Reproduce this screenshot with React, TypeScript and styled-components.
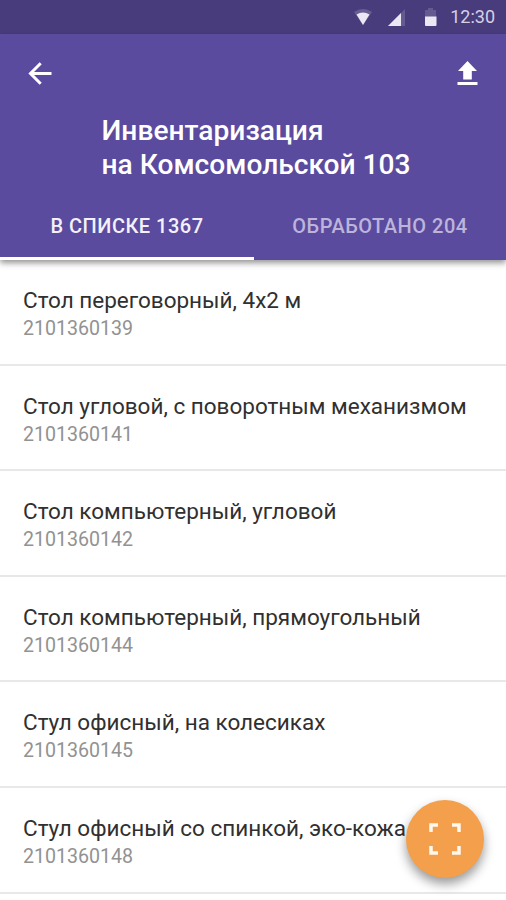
import React from 'react';
import styled, { createGlobalStyle } from 'styled-components';

const GlobalStyle = createGlobalStyle`
  * { box-sizing: border-box; }
  body { margin: 0; background: #fff; font-family: Roboto, "Noto Sans", sans-serif; }
`;

const Screen = styled.div`
  position: relative;
  width: 506px;
  height: 900px;
  overflow: hidden;
  background: #fff;
`;

const StatusBar = styled.div`
  height: 34px;
  padding-right: 11px;
  background: #493c7c;
  display: flex;
  align-items: center;
  justify-content: flex-end;
  color: #d5d0e4;
  font-size: 18px;
  line-height: 36px;
`;

const StatusIcons = styled.svg`
  margin-right: 12px;
`;

const Header = styled.header`
  height: 226px;
  background: #5b4b9e;
  color: #fff;
  display: flex;
  flex-direction: column;
  box-shadow: 0 3px 6px rgba(0, 0, 0, 0.42);
`;

const Toolbar = styled.div`
  height: 79px;
  padding: 0 28px;
  display: flex;
  align-items: center;
  justify-content: space-between;
`;

const IconButton = styled.button`
  display: flex;
  padding: 0;
  border: 0;
  background: none;
  color: #fff;
`;

const Title = styled.h1`
  margin: 0;
  padding: 1px 0 0 101.5px;
  height: 78px;
  font-size: 28.15px;
  line-height: 33.5px;
  font-weight: 500;
  white-space: nowrap;
`;

const Tabs = styled.nav`
  flex: 1;
  display: grid;
  grid-template-columns: 254px 252px;
`;

const Tab = styled.div<{ $active?: boolean }>`
  display: flex;
  align-items: center;
  justify-content: center;
  padding-top: 3px;
  font-size: 20px;
  font-weight: 500;
  letter-spacing: 0.5px;
  color: ${(p) => (p.$active ? '#f4f1fc' : '#bdb4da')};
  border-bottom: 3px solid ${(p) => (p.$active ? '#fff' : 'transparent')};
`;

const List = styled.ul`
  margin: 0;
  padding: 0;
  list-style: none;
`;

const Item = styled.li`
  height: 105.5px;
  padding: 26px 23px 0;
  border-bottom: 2px solid #e8e8e8;
  white-space: nowrap;

  &:last-child {
    height: 106.5px;
  }
`;

const Name = styled.div`
  font-size: 22.5px;
  line-height: 28px;
  color: #303030;
`;

const Code = styled.div`
  font-size: 19.6px;
  line-height: 29px;
  color: #929292;
`;

const ScanButton = styled.button`
  position: absolute;
  left: 406px;
  top: 799.5px;
  width: 78px;
  height: 78px;
  padding: 0;
  border: 0;
  border-radius: 50%;
  background: #f39f4b;
  display: flex;
  align-items: center;
  justify-content: center;
  box-shadow: 0 6px 11px rgba(0, 0, 0, 0.4);
`;

const items = [
  ['Стол переговорный, 4х2 м', '2101360139'],
  ['Стол угловой, с поворотным механизмом', '2101360141'],
  ['Стол компьютерный, угловой', '2101360142'],
  ['Стол компьютерный, прямоугольный', '2101360144'],
  ['Стул офисный, на колесиках', '2101360145'],
  ['Стул офисный со спинкой, эко-кожа', '2101360148'],
];

export default function App() {
  return (
    <Screen>
      <GlobalStyle />
      <StatusBar>
        <StatusIcons width="84" height="20" viewBox="0 0 84 20" fill="#ebe8f3">
          <path opacity=".2" d="M0 5Q9 -1 18 5L9 18Z" />
          <path d="M2.500 7.500Q9 3.500 15.500 7.500L9 18Z" />
          <path opacity=".18" d="M51 2V19H34Z" />
          <path d="M47 6V19H34Z" />
          <path opacity=".18" d="M71 3h3V1h5v2h3v7H71Z" />
          <path d="M71 9.500h11.500V18q0 1-1 1H72q-1 0-1-1Z" />
        </StatusIcons>
        <span>12:30</span>
      </StatusBar>
      <Header>
        <Toolbar>
          <IconButton aria-label="Назад">
            <svg width="24" height="24" viewBox="0 0 24 24" fill="none" stroke="currentColor" strokeWidth="3">
              <path d="M23.500 11.500H3M12.700 1.300L2.500 11.500L12.700 21.700" />
            </svg>
          </IconButton>
          <IconButton aria-label="Выгрузить">
            <svg width="21" height="25" viewBox="0 0 21 25" fill="currentColor">
              <path d="M10.500 0L20 10H14.800V18.500H6.200V10H1ZM.5 21H20.500V24H.5Z" />
            </svg>
          </IconButton>
        </Toolbar>
        <Title>Инвентаризация<br />на Комсомольской 103</Title>
        <Tabs>
          <Tab $active>В СПИСКЕ 1367</Tab>
          <Tab>ОБРАБОТАНО 204</Tab>
        </Tabs>
      </Header>
      <List>
        {items.map(([name, code]) => (
          <Item key={code}>
            <Name>{name}</Name>
            <Code>{code}</Code>
          </Item>
        ))}
      </List>
      <ScanButton aria-label="Сканировать">
        <svg width="32" height="32" viewBox="0 0 32 32" fill="none" stroke="#fff8ee" strokeWidth="3.500">
          <path d="M2 9V2H9M23 2H30V9M30 23V30H23M9 30H2V23" />
        </svg>
      </ScanButton>
    </Screen>
  );
}
